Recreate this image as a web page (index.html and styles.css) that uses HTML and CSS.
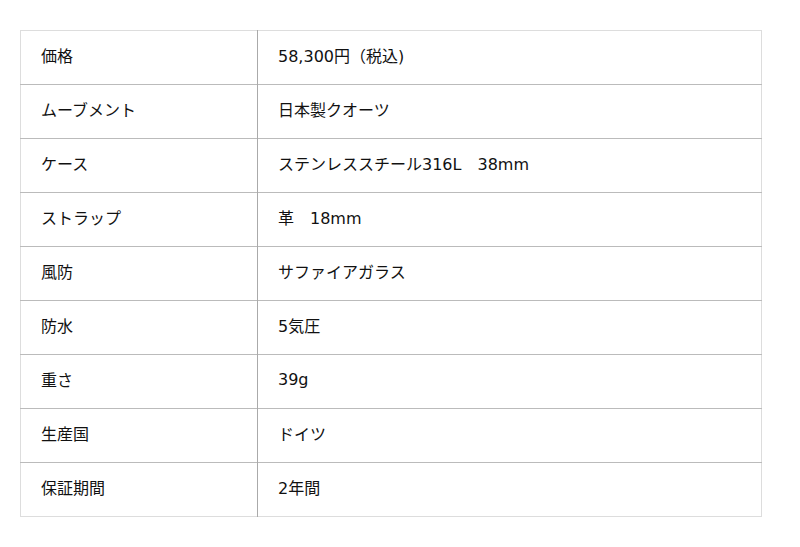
FILE: index.html
```html
<!DOCTYPE html>
<html lang="ja">
<head>
<meta charset="utf-8">
<link rel="stylesheet" href="styles.css">
</head>
<body>
<table class="spec">
<tbody>
<tr><th>価格</th><td>58,300円（税込)</td></tr>
<tr><th>ムーブメント</th><td>日本製クオーツ</td></tr>
<tr><th>ケース</th><td>ステンレススチール316L　38mm</td></tr>
<tr><th>ストラップ</th><td>革　18mm</td></tr>
<tr><th>風防</th><td>サファイアガラス</td></tr>
<tr><th>防水</th><td>5気圧</td></tr>
<tr><th>重さ</th><td>39g</td></tr>
<tr><th>生産国</th><td>ドイツ</td></tr>
<tr><th>保証期間</th><td>2年間</td></tr>
</tbody>
</table>
</body>
</html>
```
FILE: styles.css
```css
html, body {
  margin: 0;
  padding: 0;
  background: #fff;
}
body {
  padding: 30px 20px;
  font-family: "DejaVu Sans", "Noto Sans CJK JP", sans-serif;
  font-size: 16px;
  color: #111;
}
.spec {
  width: 742px;
  border-collapse: collapse;
  border: 1px solid #ddd;
}
.spec th, .spec td {
  height: 54px;
  padding: 0 20px 5px;
  box-sizing: border-box;
  text-align: left;
  font-weight: normal;
  vertical-align: middle;
  border-top: 1px solid #bbb;
}
.spec tr:first-child th, .spec tr:first-child td {
  border-top: 1px solid #ddd;
}
.spec th {
  width: 237px;
  border-right: 1px solid #aaa;
}
```
